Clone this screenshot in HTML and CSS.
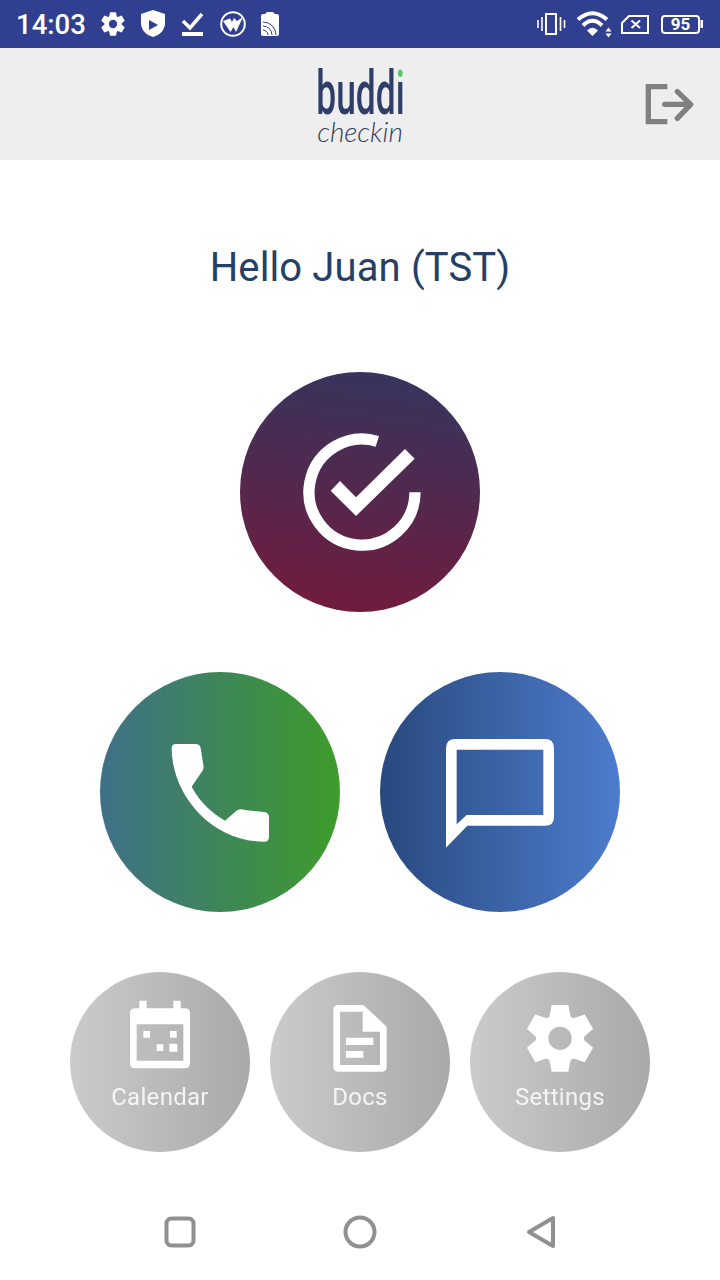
FILE: index.html
```html
<!DOCTYPE html>
<html lang="en">
	<head>
		<meta charset="UTF-8">
		<title>buddi checkin</title>
		<link rel="stylesheet" href="styles.css">
	</head>
	<body>
		<div id="statusbar">
			<div class="status-group left">
				<span id="clock">14:03</span>
				<svg width="26" height="26" viewBox="-110 -110 220 220"><path fill="#fff" fill-rule="evenodd" d="M-32-65-25-100 25-100 32-65 40.3-60.2 74.1-71.65 99.1-28.35 72.3-4.8 72.3 4.8 99.1 28.35 74.1 71.65 40.3 60.2 32 65 25 100-25 100-32 65-40.3 60.2-74.1 71.65-99.1 28.35-72.3 4.8-72.3-4.8-99.1-28.35-74.1-71.65-40.3-60.2ZM0-35A35 35 0 1 0 0 35 35 35 0 1 0 0-35Z"/></svg>
				<svg width="26" height="28" viewBox="0 0 26 28"><path fill="#fff" fill-rule="evenodd" d="M13 0 25 4V13C25 20 20 25 13 27 6 25 1 20 1 13V4ZM9 10V20L18 15Z"/></svg>
				<svg width="26" height="26" viewBox="0 0 26 26"><path fill="none" stroke="#fff" stroke-width="3.5" d="M3 10 10 17 22 3"/><rect x="2" y="21" width="21" height="4" fill="#fff"/></svg>
				<svg width="26" height="26" viewBox="0 0 26 26"><circle cx="13" cy="13" r="11.800" fill="none" stroke="#fff" stroke-width="2"/><path fill="#fff" d="M3 10 10 7.500 12 11 14 7 17 10 23 6 16 21 13.500 16 10.500 21Z"/></svg>
				<svg width="20" height="26" viewBox="0 0 20 26"><path fill="#fff" d="M5 3 7 1H13L15 3H17A2 2 0 0 1 19 5V23A2 2 0 0 1 17 25H3A2 2 0 0 1 1 23V5A2 2 0 0 1 3 3Z"/><path fill="none" stroke="#303f90" stroke-width="1" d="M3 19A5 5 0 0 1 8 24M3 15A9 9 0 0 1 12 24M3 11A13 13 0 0 1 16 24"/></svg>
			</div>
			<div class="status-group right">
				<svg width="30" height="24" viewBox="0 0 30 24"><rect x="10" y="2" width="10" height="20" fill="none" stroke="#fff" stroke-width="2"/><path fill="none" stroke="#fff" stroke-width="1.600" d="M2 8V16M6 5V19M24.500 5V19M28.500 8V16"/></svg>
				<svg width="36" height="28" viewBox="0 0 36 28"><path fill="none" stroke="#fff" stroke-width="4" d="M2 9.500Q16.500-3 31 9.500M7 15.500Q16.500 6 26 15.500"/><path fill="#fff" d="M11 20.500Q16.500 15 22 20.500L16.500 26ZM29.500 21.500 32.500 17.500 35.500 21.500ZM29.500 23.500H35.500L32.500 27.500Z"/></svg>
				<svg class="sim" width="30" height="20" viewBox="0 0 30 20"><path fill="none" stroke="#fff" stroke-width="2" d="M9 2H28V19H2V9ZM11.500 6.500 20 14M20 6.500 11.500 14"/></svg>
				<svg width="44" height="20" viewBox="0 0 44 20"><rect x="2" y="2" width="37" height="17" rx="3" fill="none" stroke="#fff" stroke-width="2"/><path fill="#fff" d="M40.500 6H43V14H40.500Z"/><text x="20.500" y="16" class="battery-level" text-anchor="middle">95</text></svg>
			</div>
		</div>

		<div id="header">
			<div class="logo">
				<span class="logo-name">budd<span class="logo-i">i</span></span>
				<span class="logo-sub">checkin</span>
			</div>
			<svg class="logout" width="80" height="70" viewBox="0 -3 240 210"><path fill="none" stroke="#808080" stroke-width="16" d="M112 50H55V155H112"/><path fill="none" stroke="#808080" stroke-width="16" stroke-linecap="round" stroke-linejoin="round" d="M104 103H178M142 65 182 103 142 145"/></svg>
		</div>

		<div id="content">
			<h1 id="greeting">Hello Juan (TST)</h1>
			<div class="row">
				<div class="btn btn-lg btn-checkin">
					<svg width="140" height="140" viewBox="0 6 420 420"><path fill="none" stroke="#fff" stroke-width="34" d="M262 64A159 159 0 1 0 375 217"/><path fill="#fff" d="M122 212 150 183 198 232 345 87 374 116 198 288Z"/></svg>
				</div>
			</div>
			<div class="row row-two">
				<div class="btn btn-lg btn-phone">
					<svg width="140" height="125" viewBox="0 0 420 375"><path fill="#fff" d="M78 42H136Q150 42 152 54L160 105Q163 118 155 126L125 170C150 215 180 245 225 272L262 240Q272 235 285 240L342 246Q357 248 357 262V320Q357 335 343 335C180 335 65 190 65 55Q65 42 78 42Z"/></svg>
				</div>
				<div class="btn btn-lg btn-chat">
					<svg width="140" height="130" viewBox="0 6 420 390"><path fill="#fff" fill-rule="evenodd" d="M48 368V70Q48 42 76 42H345Q372 42 372 70V275Q372 302 345 302H112ZM80 74V298L110 270H340V74Z"/></svg>
				</div>
			</div>
			<div class="row row-three">
				<div class="btn btn-sm">
					<svg width="80" height="75" viewBox="60 30 240 225"><path fill="#fff" fill-rule="evenodd" d="M118 32H140V55H220V32H242V55H255Q270 55 270 70V220Q270 235 255 235H105Q90 235 90 220V70Q90 55 105 55H118ZM110 103V212H250V103ZM130 123H150V143H130ZM210 123H230V143H210ZM170 163H190V183H170ZM208 161H232V185H208Z"/></svg>
					<span class="btn-label">Calendar</span>
				</div>
				<div class="btn btn-sm">
					<svg width="80" height="75" viewBox="30 30 240 225"><path fill="#fff" fill-rule="evenodd" d="M85 45H160L230 110V230Q230 245 215 245H85Q70 245 70 230V60Q70 45 85 45ZM90 65V225H210V125H158V65ZM108 143H190V165H108ZM108 183H160V203H108Z"/></svg>
					<span class="btn-label">Docs</span>
				</div>
				<div class="btn btn-sm">
					<svg width="80" height="75" viewBox="60 30 240 225"><path fill="#fff" fill-rule="evenodd" transform="translate(180 145)" d="M-32-65-25-100 25-100 32-65 40.3-60.2 74.1-71.65 99.1-28.35 72.3-4.8 72.3 4.8 99.1 28.35 74.1 71.65 40.3 60.2 32 65 25 100-25 100-32 65-40.3 60.2-74.1 71.65-99.1 28.35-72.3 4.8-72.3-4.8-99.1-28.35-74.1-71.65-40.3-60.2ZM0-35A35 35 0 1 0 0 35 35 35 0 1 0 0-35Z"/></svg>
					<span class="btn-label">Settings</span>
				</div>
			</div>
		</div>

		<div id="navbar">
			<svg width="40" height="40" viewBox="0 0 40 40"><rect x="6.500" y="6.500" width="27" height="27" rx="5" class="nav-icon"/></svg>
			<svg width="40" height="40" viewBox="0 0 40 40"><circle cx="20" cy="20" r="14.500" class="nav-icon"/></svg>
			<svg width="40" height="40" viewBox="0 0 40 40"><path d="M33 6V34L9 20Z" class="nav-icon"/></svg>
		</div>
	</body>
</html>
```

FILE: styles.css
```css
* {
	box-sizing: border-box;
}

body {
	margin:         0;
	width:          720px;
	height:         1280px;
	display:        flex;
	flex-direction: column;
	overflow:       hidden;
	background:     #fff;
	font-family:    Roboto, sans-serif;
}

svg {
	display: block;
	flex:    none;
}

#statusbar {
	height:          48px;
	flex:            none;
	display:         flex;
	justify-content: space-between;
	align-items:     center;
	padding:         0 16px 0 16px;
	background:      #303f90;
}

.status-group {
	display:     flex;
	align-items: center;
}

.status-group.left {
	gap: 14px;
}

.status-group.right {
	gap: 10px;
}

.sim {
	margin-left: -2px;
}

#clock {
	color:        #fff;
	font-size:    27.5px;
	font-weight:  500;
	width:        70px;
	padding-top:  1px;
}

.battery-level {
	fill:        #fff;
	font-family: Roboto, sans-serif;
	font-size:   17px;
	font-weight: 700;
}

#header {
	height:          112px;
	flex:            none;
	display:         flex;
	justify-content: center;
	align-items:     center;
	position:        relative;
	background:      #eeeeee;
}

.logo {
	width:          86px;
	padding-top:    2px;
	display:        flex;
	flex-direction: column;
	align-items:    center;
}

.logo-name {
	display:     block;
	font-size:   62px;
	line-height: 52px;
	font-weight: 500;
	color:       #2f3e68;
	white-space: nowrap;
	transform:   scaleX(0.57);
}

.logo-i {
	color:           transparent;
	background:      linear-gradient(#5cc46a 0 36%, #2f3e68 36% 100%);
	background-clip: text;
	-webkit-background-clip: text;
}

.logo-sub {
	display:     block;
	font-family: Lato, sans-serif;
	font-size:   28px;
	line-height: 24px;
	font-style:  italic;
	font-weight: 300;
	color:       #33415f;
}

.logout {
	position: absolute;
	top:      21px;
	right:    10px;
}

#content {
	flex:           1;
	display:        flex;
	flex-direction: column;
	align-items:    center;
	gap:            60px;
	padding-top:    84px;
}

#greeting {
	margin:         0 0 20px;
	font-size:      40px;
	line-height:    48px;
	font-weight:    400;
	letter-spacing: 0.13px;
	color:          #253f66;
}

.row {
	display:         flex;
	justify-content: center;
}

.row-two {
	gap: 40px;
}

.row-three {
	gap: 20px;
}

.btn {
	border-radius:  50%;
	display:        flex;
	flex-direction: column;
	align-items:    center;
}

.btn-lg {
	width:           240px;
	height:          240px;
	justify-content: center;
}

.btn-sm {
	width:       180px;
	height:      180px;
	padding-top: 28px;
	background:  linear-gradient(90deg, #cbcbcb, #a9a9a9);
}

.btn-label {
	margin-top:     8px;
	font-size:      24px;
	line-height:    28px;
	letter-spacing: 0.3px;
	color:          #fff;
	opacity:        0.85;
}

.btn-checkin {
	background: linear-gradient(188deg, #33365f, #751a3c);
}

.btn-phone {
	background: linear-gradient(90deg, #3f7088, #3d9c2a);
}

.btn-chat {
	background: linear-gradient(90deg, #28497e, #4d7ccd);
}

#navbar {
	height:                96px;
	flex:                  none;
	display:               grid;
	grid-template-columns: repeat(3, 180px);
	justify-content:       center;
	justify-items:         center;
	align-items:           center;
}

.nav-icon {
	fill:            none;
	stroke:          #909090;
	stroke-width:    4;
	stroke-linejoin: round;
}
```
